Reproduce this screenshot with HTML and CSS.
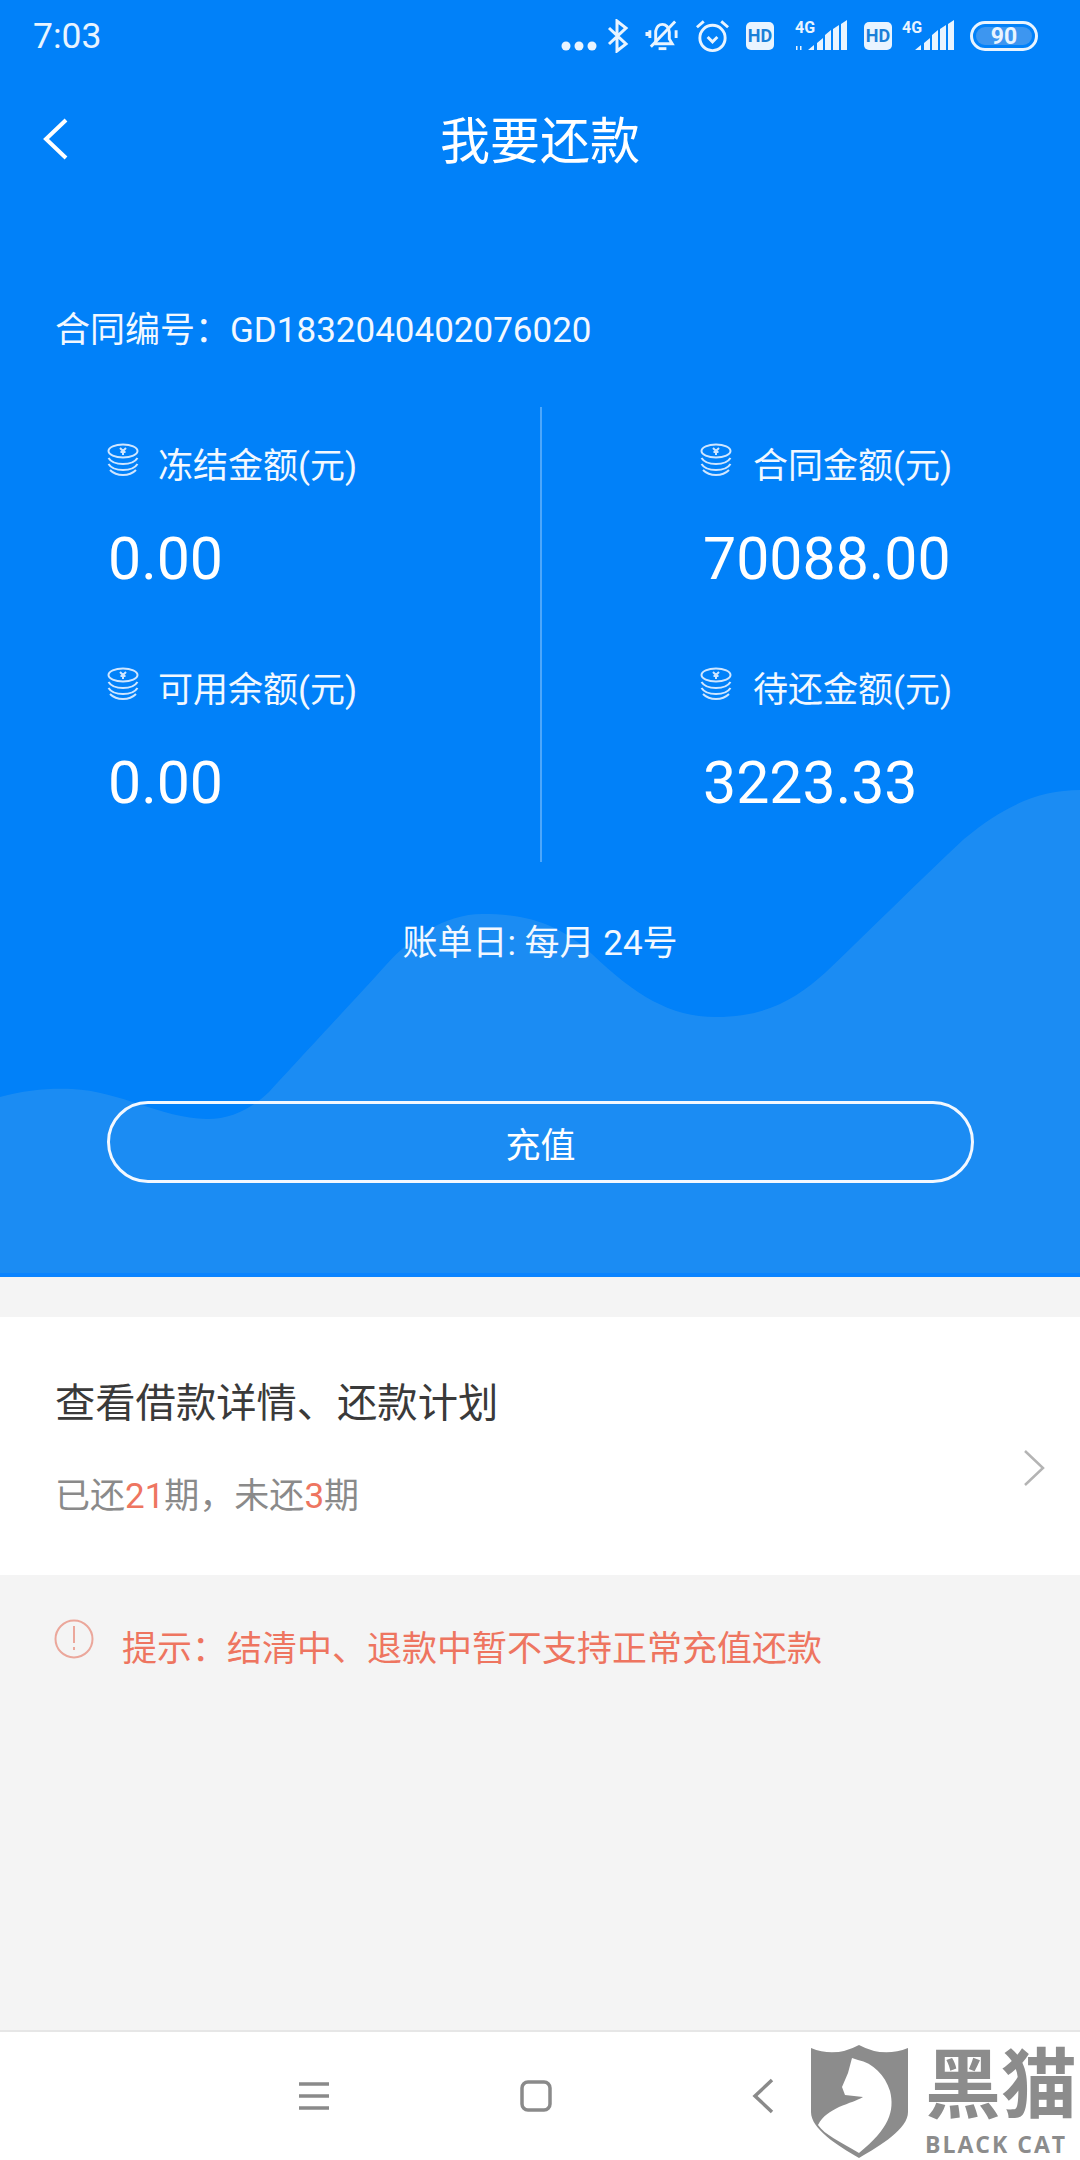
FILE: index.html
```html
<!DOCTYPE html>
<html lang="zh-CN">
<head>
    <meta charset="UTF-8">
    <meta name="viewport" content="width=device-width, initial-scale=1.0">
    <title>我要还款</title>
    <link rel="stylesheet" href="styles.css">
</head>
<body>
    <div class="page">
        <div class="hero">
            <svg class="wave" viewBox="0 0 1080 1280" preserveAspectRatio="none">
                <path d="M0 1097 C25 1090 50 1088 72 1089 C120 1091 160 1118 207 1119 C232 1119 252 1108 269 1092 C300 1058 360 994 386 965 C410 938 445 914 482 914 C530 914 560 925 592 954 C635 995 670 1017 716 1017 C765 1017 795 1000 826 972 C870 930 920 880 964 839 C1005 805 1040 790 1080 790 L1080 1280 L0 1280 Z"/>
            </svg>

            <div class="statusbar">
                <span class="time">7:03</span>
                <div class="status-icons">
                    <svg class="dots" width="36" height="12" viewBox="0 0 36 12"><circle cx="5" cy="6" r="4.5"/><circle cx="18" cy="6" r="4.5"/><circle cx="31" cy="6" r="4.5"/></svg>
                    <svg width="22" height="34" viewBox="0 0 22 34" class="line"><path d="M2 9 L19 25 L10 32 V2 L19 9 L2 25"/></svg>
                    <svg width="35" height="34" viewBox="0 0 36 34" class="line"><path d="M11 25 H28 L25 20 V13 C25 8 21 5 18 5 C15 5 12 7 11 12 V20 Z"/><path d="M14 30 H22"/><path d="M6 28 L31 2"/><path d="M5 11 V19 M2 13 V17 M32 11 V19"/></svg>
                    <svg class="alarm" width="35" height="36" viewBox="0 0 36 36"><g class="line"><circle cx="18" cy="20" r="13"/><path d="M2 9 L9 3 M34 9 L27 3"/><path d="M13 19 L18 24 L23 19"/></g></svg>
                    <svg width="28" height="28" viewBox="0 0 28 28"><rect width="28" height="28" rx="5" fill="#e9f4ff"/><text x="14" y="20" text-anchor="middle" class="hd">HD</text></svg>
                    <svg class="signal-a" width="55" height="36" viewBox="0 -4 55 36"><text x="2" y="13" class="net">4G</text><path d="M3 26 h1.5 v4 h-1.5 Z M7 26 h1.5 v4 h-1.5 Z"/><path d="M15 30 L21 25 V30 Z M24 23 L30 18 V30 H24 Z M32 15 L38 10 V30 H32 Z M40 9 L46 5 V30 H40 Z M48 4 L54 0 V30 H48 Z"/></svg>
                    <svg width="28" height="28" viewBox="0 0 28 28"><rect width="28" height="28" rx="5" fill="#e9f4ff"/><text x="14" y="20" text-anchor="middle" class="hd">HD</text></svg>
                    <svg class="signal-b" width="53" height="36" viewBox="0 -4 53 36"><text x="0" y="13" class="net">4G</text><path d="M13 30 L19 25 V30 Z M22 23 L28 18 V30 H22 Z M30 15 L36 10 V30 H30 Z M38 9 L44 5 V30 H38 Z M46 4 L52 0 V30 H46 Z"/></svg>
                    <svg class="battery" width="68" height="30" viewBox="0 0 68 30"><rect x="1.5" y="1.5" width="65" height="27" rx="13.5" fill="none" stroke="#e9f4ff" stroke-width="3"/><rect x="6" y="6" width="56" height="18" rx="9" fill="#3d96f0"/><text x="34" y="23" text-anchor="middle" class="batt">90</text></svg>
                </div>
            </div>

            <div class="navbar">
                <svg class="nav-back" width="26" height="42" viewBox="0 0 26 42"><path d="M23 2 L3 21 L23 40"/></svg>
                <h1>我要还款</h1>
            </div>

            <div class="contract">合同编号：GD1832040402076020</div>

            <div class="stats">
                <div class="col col-left">
                    <div class="stat">
                        <div class="stat-label">
                            <svg class="coin" width="32" height="33" viewBox="0 0 32 33"><ellipse cx="16" cy="8" rx="14.5" ry="6.5"/><path d="M1.5 15 C4 19 10 21 16 21 C22 21 28 19 30.5 15"/><path d="M1.5 21 C4 25 10 27 16 27 C22 27 28 25 30.5 21"/><path d="M3 27 C6 30 11 32 16 32 C21 32 26 30 29 27"/><path d="M13 5 L16 8 L19 5 M16 8 V12 M13.5 9 H18.5"/></svg>
                            冻结金额(元)
                        </div>
                        <div class="stat-value">0.00</div>
                    </div>
                    <div class="stat">
                        <div class="stat-label">
                            <svg class="coin" width="32" height="33" viewBox="0 0 32 33"><ellipse cx="16" cy="8" rx="14.5" ry="6.5"/><path d="M1.5 15 C4 19 10 21 16 21 C22 21 28 19 30.5 15"/><path d="M1.5 21 C4 25 10 27 16 27 C22 27 28 25 30.5 21"/><path d="M3 27 C6 30 11 32 16 32 C21 32 26 30 29 27"/><path d="M13 5 L16 8 L19 5 M16 8 V12 M13.5 9 H18.5"/></svg>
                            可用余额(元)
                        </div>
                        <div class="stat-value">0.00</div>
                    </div>
                </div>
                <div class="col col-right">
                    <div class="stat">
                        <div class="stat-label">
                            <svg class="coin" width="32" height="33" viewBox="0 0 32 33"><ellipse cx="16" cy="8" rx="14.5" ry="6.5"/><path d="M1.5 15 C4 19 10 21 16 21 C22 21 28 19 30.5 15"/><path d="M1.5 21 C4 25 10 27 16 27 C22 27 28 25 30.5 21"/><path d="M3 27 C6 30 11 32 16 32 C21 32 26 30 29 27"/><path d="M13 5 L16 8 L19 5 M16 8 V12 M13.5 9 H18.5"/></svg>
                            合同金额(元)
                        </div>
                        <div class="stat-value">70088.00</div>
                    </div>
                    <div class="stat">
                        <div class="stat-label">
                            <svg class="coin" width="32" height="33" viewBox="0 0 32 33"><ellipse cx="16" cy="8" rx="14.5" ry="6.5"/><path d="M1.5 15 C4 19 10 21 16 21 C22 21 28 19 30.5 15"/><path d="M1.5 21 C4 25 10 27 16 27 C22 27 28 25 30.5 21"/><path d="M3 27 C6 30 11 32 16 32 C21 32 26 30 29 27"/><path d="M13 5 L16 8 L19 5 M16 8 V12 M13.5 9 H18.5"/></svg>
                            待还金额(元)
                        </div>
                        <div class="stat-value">3223.33</div>
                    </div>
                </div>
            </div>

            <div class="bill-day">账单日: 每月 24号</div>
            <div class="charge-btn">充值</div>
        </div>

        <div class="plan-card">
            <div>
                <div class="plan-title">查看借款详情、还款计划</div>
                <div class="plan-sub">已还<span class="red">21</span>期，未还<span class="red">3</span>期</div>
            </div>
            <svg class="plan-arrow" width="22" height="36" viewBox="0 0 22 36"><path d="M2 1 L20 18 L2 35"/></svg>
        </div>

        <div class="tip">
            <svg class="tip-icon" width="40" height="42" viewBox="0 0 40 42"><circle cx="20" cy="21" r="18.5"/><path d="M20 8 V25 M20 29 V32"/></svg>
            <span>提示：结清中、退款中暂不支持正常充值还款</span>
        </div>

        <div class="bottom-nav">
            <svg width="32" height="30" viewBox="0 0 32 30" class="nav-icon"><path d="M1 3 H31 M1 15 H31 M1 27 H31"/></svg>
            <svg width="32" height="32" viewBox="0 0 32 32" class="nav-icon"><rect x="2" y="2" width="28" height="28" rx="6"/></svg>
            <svg width="24" height="36" viewBox="0 0 24 36" class="nav-icon"><path d="M20 2 L3 18 L20 34"/></svg>
        </div>

        <div class="watermark">
            <svg class="shield" width="97" height="113" viewBox="0 0 97 113">
                <path fill="#8c8c8c" d="M0 3 Q24 13 48 0 Q72 13 97 3 V67 C97 84 70 100 48 113 C26 100 0 84 0 67 Z"/>
                <path fill="#fff" d="M41 13 L47 15 C62 18 74 30 79 46 C84 66 78 84 48 108 C28 96 14 90 7 80 C12 70 19 67 28 62 C38 58 47 55 52 52 L34 50 L31 42 L37 28 Z"/>
            </svg>
            <div class="wm-text">
                <div class="wm-cn">黑猫</div>
                <div class="wm-en">BLACK CAT</div>
            </div>
        </div>
    </div>
</body>
</html>
```

FILE: styles.css
```css
* {
    box-sizing: border-box;
}
body {
    margin: 0;
    font-family: Roboto, "Noto Sans CJK SC", sans-serif;
}
.page {
    position: relative;
    width: 1080px;
    height: 2160px;
    overflow: hidden;
    background: #f4f4f4;
    display: flex;
    flex-direction: column;
}
.hero {
    position: relative;
    height: 1277px;
    flex-shrink: 0;
    background: #0181f9;
    border-bottom: 4px solid #0a84ff;
    color: #fff;
    overflow: hidden;
}
.wave {
    position: absolute;
    top: 0;
    left: 0;
    width: 1080px;
    height: 1280px;
    fill: #1b8cf3;
}
.statusbar, .navbar, .contract, .stats, .bill-day, .charge-btn {
    position: relative;
}
.statusbar {
    height: 72px;
    padding: 0 42px 0 33px;
    display: flex;
    align-items: center;
    justify-content: space-between;
}
.time {
    font-size: 35.5px;
    color: #e9f4ff;
}
.status-icons {
    display: flex;
    align-items: center;
    gap: 16px;
    fill: #e9f4ff;
}
.status-icons .dots {
    margin-top: 20px;
    margin-right: -6px;
}
.status-icons .alarm {
    margin-left: -1px;
}
.status-icons .signal-a {
    margin-left: 3px;
    margin-top: -5px;
}
.status-icons .signal-b {
    margin-left: -6px;
    margin-top: -5px;
}
.status-icons .battery {
    margin-left: -1px;
}
.status-icons .line {
    fill: none;
    stroke: #e9f4ff;
    stroke-width: 3;
}
.hd {
    font: 700 18px Roboto, sans-serif;
    fill: #1a7fd8;
}
.net {
    font: 700 16px Roboto, sans-serif;
}
.batt {
    font: 700 23px Roboto, sans-serif;
}
.navbar {
    height: 80px;
    margin-top: 25px;
    display: flex;
    align-items: center;
    justify-content: center;
}
.navbar h1 {
    margin: 0;
    font-size: 50px;
    font-weight: 400;
}
.nav-back {
    position: absolute;
    left: 43px;
    top: 21px;
    fill: none;
    stroke: #fff;
    stroke-width: 4;
}
.contract {
    margin-top: 134px;
    padding-left: 55px;
    font-size: 35px;
    line-height: 40px;
    color: #f2f8ff;
}
.stats {
    margin-top: 56px;
    height: 455px;
    display: flex;
}
.col {
    padding-top: 33px;
}
.col-left {
    width: 542px;
    padding-left: 108px;
    border-right: 2px solid rgba(255, 255, 255, 0.3);
}
.col-right {
    padding-left: 159px;
}
.col-right .coin {
    margin-right: 21px;
}
.col-right .stat-value {
    margin-left: 2px;
}
.stat {
    height: 224px;
}
.stat-label {
    height: 44px;
    display: flex;
    align-items: center;
    font-size: 35px;
    color: #f2f8ff;
}
.coin {
    margin: -5px 19px 0 -1px;
    fill: none;
    stroke: #cfe6ff;
    stroke-width: 2;
}
.stat-value {
    margin-top: 40px;
    height: 70px;
    font-size: 59px;
    line-height: 70px;
}
.bill-day {
    margin-top: 60px;
    text-align: center;
    font-size: 35px;
    line-height: 44px;
    color: #f2f8ff;
}
.charge-btn {
    margin: 135px 106px 0 107px;
    height: 82px;
    border: 3px solid #f2f8ff;
    border-radius: 41px;
    display: flex;
    align-items: center;
    justify-content: center;
    font-size: 35px;
}
.plan-card {
    margin-top: 40px;
    height: 258px;
    flex-shrink: 0;
    background: #fff;
    padding: 8px 35px 0 55px;
    display: flex;
    align-items: center;
    justify-content: space-between;
}
.plan-title {
    font-size: 40.3px;
    line-height: 50px;
    color: #3a3a3a;
}
.plan-sub {
    margin-top: 44px;
    font-size: 35px;
    line-height: 48px;
    color: #8a8a8a;
}
.red {
    color: #ee7560;
}
.plan-arrow {
    margin-top: 36px;
    fill: none;
    stroke: #b4b4b4;
    stroke-width: 2.5;
}
.tip {
    margin-top: 43px;
    padding-left: 54px;
    display: flex;
    align-items: flex-start;
    color: #ee7560;
    font-size: 35px;
    line-height: 50px;
}
.tip span {
    margin-left: 28px;
    margin-top: 7px;
}
.tip-icon {
    fill: none;
    stroke: #eba79b;
    stroke-width: 2;
}
.bottom-nav {
    position: absolute;
    left: 0;
    bottom: 0;
    width: 100%;
    height: 130px;
    background: #fff;
    border-top: 2px solid #e6e6e6;
    padding-left: 298px;
    display: flex;
    align-items: center;
    gap: 190px;
}
.nav-icon {
    fill: none;
    stroke: #8a8a8a;
    stroke-width: 3.5;
}
.nav-icon:last-child {
    margin-left: 10px;
}
.watermark {
    position: absolute;
    left: 811px;
    top: 2045px;
    display: flex;
    color: #8c8c8c;
}
.wm-text {
    margin-left: 17px;
}
.wm-cn {
    font-size: 76px;
    line-height: 82px;
    font-weight: 700;
    white-space: nowrap;
}
.wm-en {
    font-size: 23px;
    line-height: 24px;
    margin-top: 5px;
    font-weight: 700;
    letter-spacing: 2px;
    white-space: nowrap;
    font-family: "Open Sans", sans-serif;
}
```
